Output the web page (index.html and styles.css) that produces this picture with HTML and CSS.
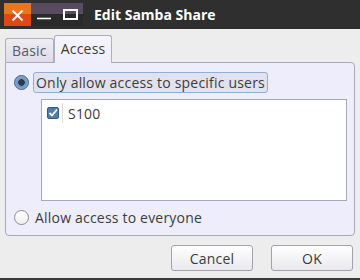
FILE: index.html
```html
<!DOCTYPE html>
<html lang="en">

<head>
    <meta charset="UTF-8">
    <title>Edit Samba Share</title>
    <link rel="stylesheet" href="styles.css">
</head>

<body>
    <div class="window">
        <header class="titlebar">
            <div class="winbtns">
                <div class="btn-close">
                    <svg width="27" height="23" viewBox="0 0 27 23">
                        <path d="M8.5 7.5 L18.5 17.5 M18.5 7.5 L8.5 17.5" stroke="#fff" stroke-width="2" fill="none"/>
                    </svg>
                </div>
                <div class="btn-rest">
                    <svg width="52" height="23" viewBox="0 0 52 23">
                        <line x1="6" y1="15.5" x2="20" y2="15.5" stroke="#fff" stroke-width="1.6"/>
                        <rect x="33" y="7" width="13" height="9" stroke="#fff" stroke-width="2" fill="none"/>
                    </svg>
                </div>
            </div>
            <h1>Edit Samba Share</h1>
        </header>

        <div class="tabs">
            <div class="tab">Basic</div>
            <div class="tab active">Access</div>
        </div>

        <div class="panel">
            <div class="option">
                <span class="radio checked"></span>
                <span class="label focused">Only allow access to specific users</span>
            </div>

            <div class="userlist">
                <div class="user">
                    <span class="check">
                        <svg width="12" height="12" viewBox="0 0 12 12">
                            <path d="M2.5 6 L5 8.5 L10 2.5" stroke="#fff" stroke-width="1.8" fill="none"/>
                        </svg>
                    </span>
                    <span class="sep"></span>
                    <span class="name">S100</span>
                </div>
            </div>

            <div class="option last">
                <span class="radio"></span>
                <span class="label">Allow access to everyone</span>
            </div>
        </div>

        <div class="actions">
            <button class="button">Cancel</button>
            <button class="button">OK</button>
        </div>
    </div>
</body>

</html>
```

FILE: styles.css
```css
body {
    margin: 0;
    padding: 0;
    background-color: #3a3a3a;
    font-family: "Open Sans", "Noto Sans", sans-serif;
}

.window {
    width: 360px;
    height: 278px;
    background-color: #ededed;
    color: #3c3c3c;
    font-size: 14px;
    letter-spacing: 0.2px;
}

.titlebar {
    display: flex;
    align-items: flex-start;
    height: 29px;
    background-color: #2f2f2f;
}

.winbtns {
    display: flex;
    margin: 3px 0 0 4px;
    height: 23px;
}

.btn-close {
    width: 27px;
    height: 23px;
    background: linear-gradient(#e8761e 0, #e8761e 11px, #dd4814 11px);
}

.btn-rest {
    width: 52px;
    height: 23px;
    background: linear-gradient(#594b60 0, #594b60 11px, #2a2a2a 11px);
}

.btn-close svg,
.btn-rest svg {
    display: block;
}

h1 {
    margin: 0 0 0 11px;
    font-size: 14px;
    font-weight: bold;
    letter-spacing: 0;
    color: #ffffff;
    line-height: 29px;
}

.tabs {
    display: flex;
    align-items: flex-end;
    height: 33px;
    padding-left: 5px;
}

.tab {
    box-sizing: border-box;
    height: 24px;
    padding: 0 6px;
    border: 1px solid #b0aebb;
    border-bottom: none;
    border-radius: 3px 3px 0 0;
    background: linear-gradient(#eeedf3, #dddce8);
    color: #5b5b62;
    line-height: 24px;
}

.tab.active {
    height: 28px;
    margin-bottom: -1px;
    background: linear-gradient(#f6f5fd, #eeedfb);
    color: #3c3c3c;
    line-height: 26px;
}

.panel {
    box-sizing: border-box;
    height: 174px;
    margin: 0 5px;
    padding: 8px 7px 0 8px;
    border: 1px solid #aaa8b8;
    border-radius: 0 4px 4px 4px;
    background-color: #eeedfb;
}

.option {
    display: flex;
    align-items: center;
    height: 22px;
}

.radio {
    box-sizing: border-box;
    width: 15px;
    height: 15px;
    border-radius: 50%;
    border: 1px solid #8b8a92;
    background: linear-gradient(#ffffff, #f0f0f0);
}

.radio.checked {
    border-color: #3e6188;
    background: radial-gradient(circle, #2a3c55 0, #2a3c55 3px, #6b90bb 3.5px, #86a6cc 6px);
}

.label {
    margin-left: 4px;
    padding: 0 2px;
    line-height: 19px;
}

.label.focused {
    border: 1px solid #8fb0d4;
    border-radius: 3px;
    background-color: #e2e1ee;
}

.userlist {
    box-sizing: border-box;
    height: 102px;
    margin: 6px 0 0 27px;
    padding: 3px 0 0 5px;
    border: 1px solid #a9a7b8;
    background-color: #ffffff;
}

.user {
    display: flex;
    align-items: center;
    height: 20px;
}

.check {
    box-sizing: border-box;
    width: 12px;
    height: 12px;
    border: 1px solid #345a80;
    border-radius: 2px;
    background-color: #4f7dab;
}

.check svg {
    display: block;
    margin: -1px;
}

.sep {
    width: 1px;
    height: 20px;
    margin-left: 3px;
    background-color: #dcdcdc;
}

.name {
    margin-left: 5px;
}

.option.last {
    margin-top: 5px;
}

.actions {
    display: flex;
    justify-content: flex-end;
    gap: 18px;
    padding: 9px 7px 0 0;
}

.button {
    box-sizing: border-box;
    width: 82px;
    height: 26px;
    border: 1px solid #a3a1ad;
    border-radius: 3px;
    background: linear-gradient(#ffffff, #e9e8ee);
    color: #3c3c3c;
    font-family: "Open Sans", "Noto Sans", sans-serif;
    font-size: 14px;
    letter-spacing: 0.2px;
    padding: 0;
}
```
